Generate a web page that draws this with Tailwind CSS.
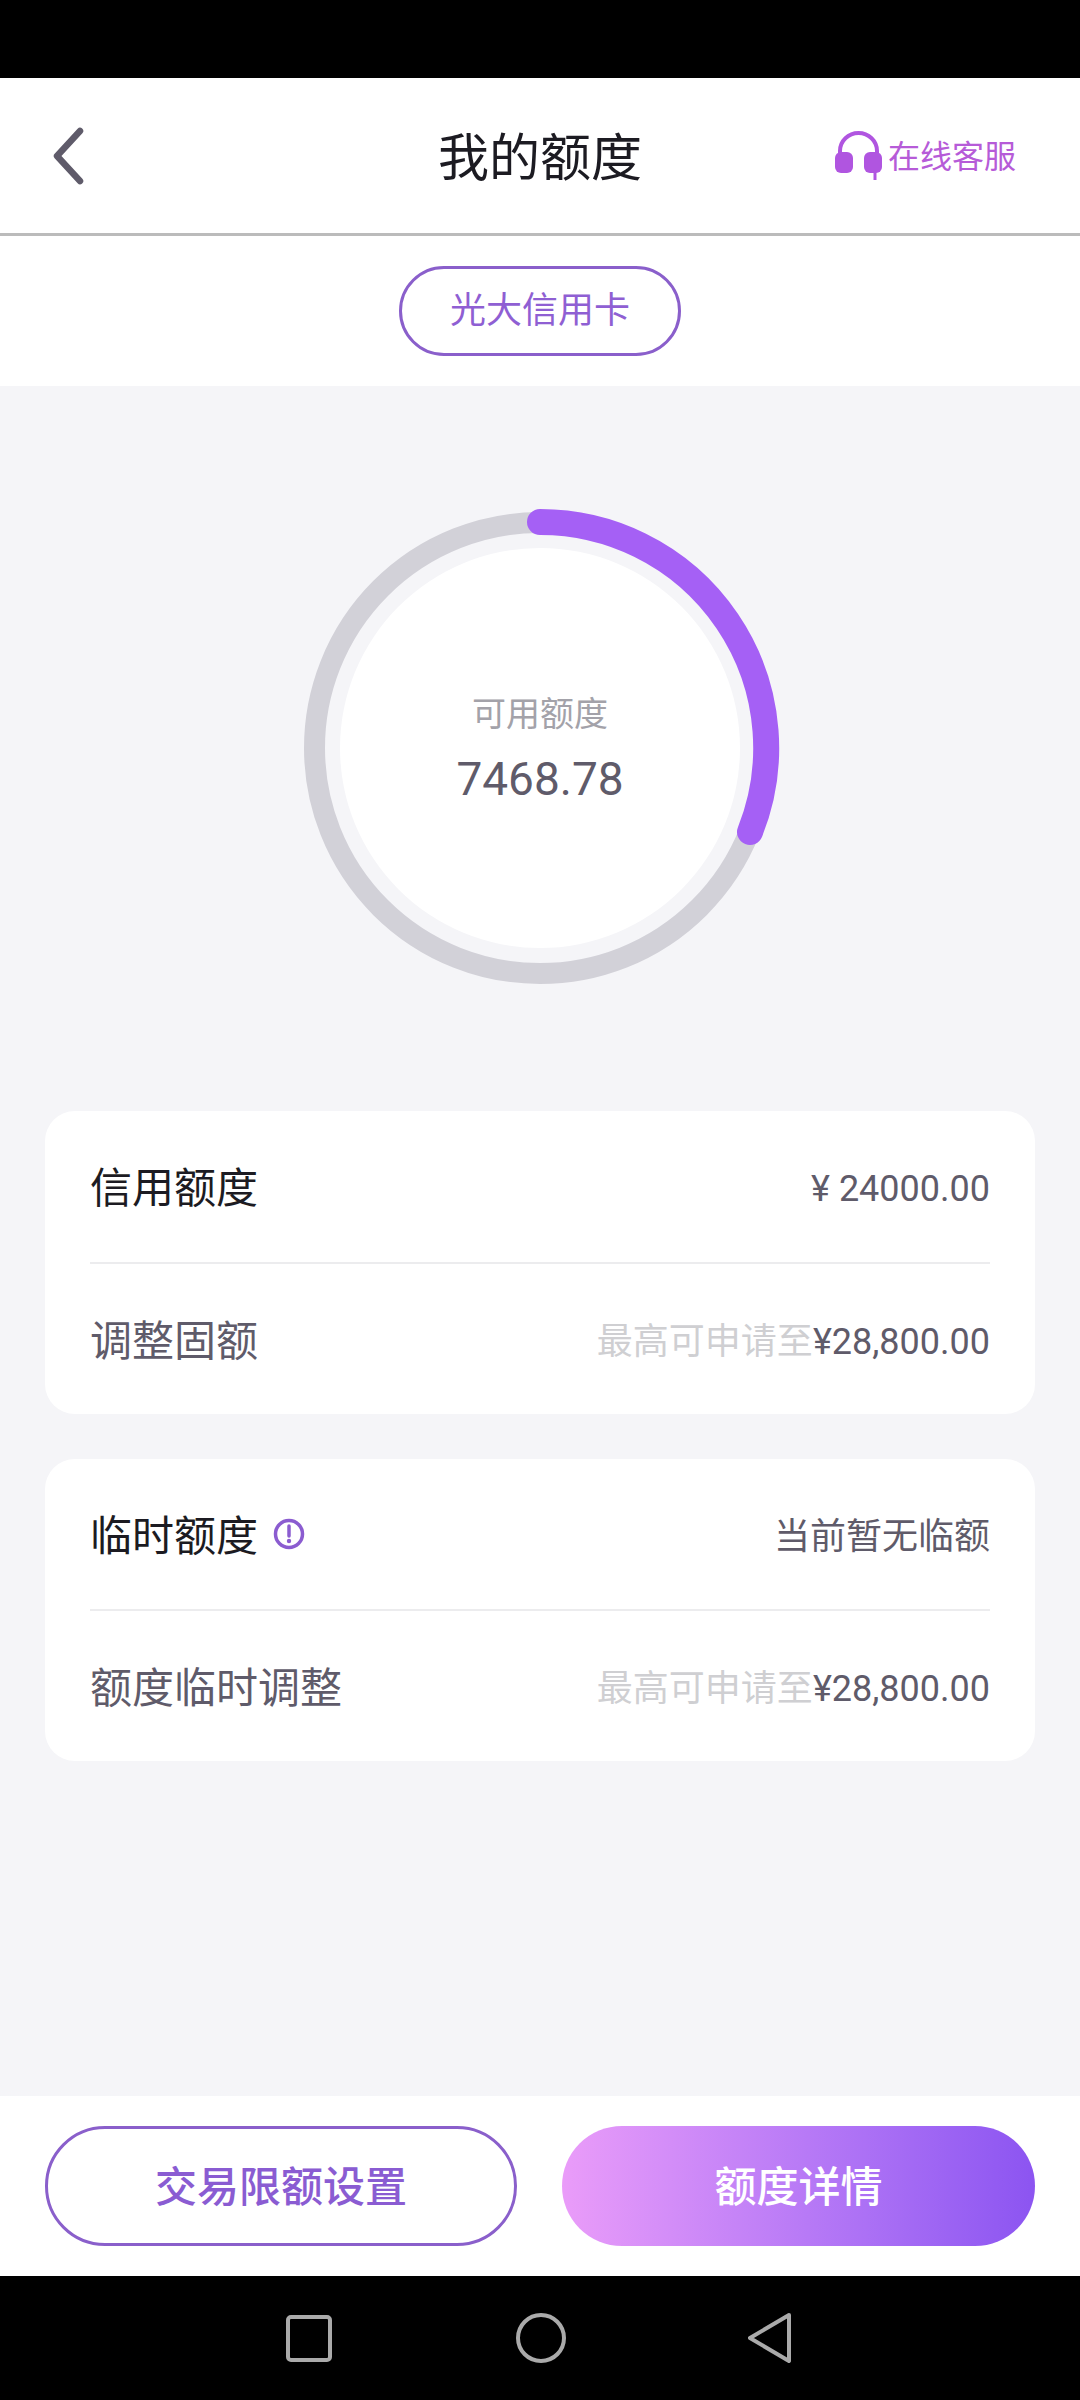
<!DOCTYPE html>
<html lang="zh-CN">
<head>
  <meta charset="UTF-8" />
  <meta name="viewport" content="width=device-width, initial-scale=1.0"/>
  <title>我的额度</title>
  <script src="https://cdn.jsdelivr.net/npm/@tailwindcss/browser@4"></script>
</head>
<body class="bg-black font-['Roboto','Noto_Sans_CJK_SC',sans-serif]">
  <div class="w-[1080px] h-[2400px] flex flex-col overflow-hidden">
    <!-- status bar -->
    <div class="h-[78px] bg-black shrink-0"></div>

    <!-- header -->
    <header class="h-[158px] shrink-0 bg-white border-b-[3px] border-[#bbbbbb] grid grid-cols-[1fr_auto_1fr] items-center">
      <svg class="w-[32px] h-[58px] ml-[52px]" viewBox="0 0 32 58" fill="none" stroke="#5f5b6a" stroke-width="6.5" stroke-linecap="round" stroke-linejoin="round">
        <path d="M28 4 5 29 28 54" />
      </svg>
      <h1 class="text-[51px] leading-none font-normal text-[#1c1b22] pt-[5px]">我的额度</h1>
      <div class="justify-self-end mr-[64px] flex items-center gap-[5px] text-[32px] leading-none text-[#b65bd8]">
        <svg class="w-[49px] h-[50px]" viewBox="0 0 49 50" fill="none">
          <path d="M6 24V20a18.500 18 0 0 1 37 0v4" stroke="#b055e0" stroke-width="4" />
          <rect x="1" y="21" width="18" height="21" rx="6" fill="#b055e0" />
          <rect x="30" y="21" width="18" height="21" rx="6" fill="#b055e0" />
          <path d="M41 40v9" stroke="#b055e0" stroke-width="3" />
        </svg>
        <span class="pt-[3px]">在线客服</span>
      </div>
    </header>

    <!-- card switcher -->
    <div class="h-[150px] shrink-0 bg-white flex justify-center pt-[30px]">
      <div class="w-[282px] h-[90px] rounded-full border-[3px] border-[#8a5fcb] flex items-center justify-center text-[36px] leading-none text-[#8f5fd3]">光大信用卡</div>
    </div>

    <main class="flex-1 bg-[#f5f5f8] flex flex-col items-center pt-[122px]">
      <!-- ring -->
      <div class="relative w-[480px] h-[480px] shrink-0">
        <svg class="w-full h-full" viewBox="0 0 480 480" fill="none">
          <circle cx="240" cy="240" r="225.5" stroke="#d2d1d8" stroke-width="21" />
          <circle cx="240" cy="240" r="200" fill="#ffffff" />
          <path d="M240 14A226 226 0 0 1 450 324" stroke="#a560f5" stroke-width="26" stroke-linecap="round" />
        </svg>
        <div class="absolute inset-0 flex flex-col items-center justify-center">
          <span class="text-[34px] leading-none text-[#a3a2a9] mt-[2px]">可用额度</span>
          <span class="text-[46px] leading-none text-[#5f5b6a] mt-[25px]">7468.78</span>
        </div>
      </div>

      <!-- limits -->
      <section class="w-[990px] mt-[123px] flex flex-col gap-[45px]">
        <div class="bg-white rounded-[30px] px-[45px]">
          <div class="h-[151px] flex items-center justify-between pt-[5px]">
            <span class="text-[42px] leading-none text-[#1c1b22]">信用额度</span>
            <span class="text-[36px] leading-none text-[#5f5b6a]">¥ 24000.00</span>
          </div>
          <div class="h-[2px] bg-[#ececee]"></div>
          <div class="h-[150px] flex items-center justify-between pt-[6px]">
            <span class="text-[42px] leading-none text-[#5f5b6a]">调整固额</span>
            <span class="text-[36px] leading-none text-[#5f5b6a]"><span class="text-[#cfcfd2]">最高可申请至</span>¥28,800.00</span>
          </div>
        </div>

        <div class="bg-white rounded-[30px] px-[45px]">
          <div class="h-[150px] flex items-center justify-between pt-[5px]">
            <span class="flex items-center gap-[15px] text-[42px] leading-none text-[#1c1b22]">
              临时额度
              <svg class="w-[32px] h-[32px] -mt-[5px]" viewBox="0 0 32 32" fill="none">
                <circle cx="16" cy="16" r="13.500" stroke="#8b5cd0" stroke-width="3.500" />
                <path d="M16 8v10" stroke="#8b5cd0" stroke-width="3.500" stroke-linecap="round" />
                <circle cx="16" cy="23" r="2.200" fill="#8b5cd0" />
              </svg>
            </span>
            <span class="text-[36px] leading-none text-[#5f5b6a]">当前暂无临额</span>
          </div>
          <div class="h-[2px] bg-[#ececee]"></div>
          <div class="h-[150px] flex items-center justify-between pt-[6px]">
            <span class="text-[42px] leading-none text-[#5f5b6a]">额度临时调整</span>
            <span class="text-[36px] leading-none text-[#5f5b6a]"><span class="text-[#cfcfd2]">最高可申请至</span>¥28,800.00</span>
          </div>
        </div>
      </section>
    </main>

    <!-- bottom actions -->
    <footer class="h-[180px] shrink-0 bg-white flex items-center justify-between px-[45px]">
      <button class="w-[472px] h-[120px] rounded-full border-[3px] border-[#8a5fcb] bg-white text-[42px] leading-none font-medium text-[#8a5cd2] pt-[4px]">交易限额设置</button>
      <button class="w-[473px] h-[120px] rounded-full bg-linear-to-r from-[#ea9cf9] to-[#8c54f1] text-[42px] leading-none font-medium text-white pt-[4px]">额度详情</button>
    </footer>

    <!-- system nav -->
    <nav class="h-[124px] shrink-0 bg-black flex items-center pl-[286px]">
      <svg class="w-[46px] h-[47px]" viewBox="0 0 46 47" fill="none" stroke="#aaaaaa" stroke-width="4">
        <rect x="2" y="2" width="42" height="43" rx="3" />
      </svg>
      <svg class="w-[50px] h-[50px] ml-[184px]" viewBox="0 0 50 50" fill="none" stroke="#aaaaaa" stroke-width="4">
        <circle cx="25" cy="25" r="23" />
      </svg>
      <svg class="w-[43px] h-[50px] ml-[182px]" viewBox="0 0 43 50" fill="none" stroke="#aaaaaa" stroke-width="4" stroke-linejoin="round">
        <path d="M41 2 2 25 41 48z" />
      </svg>
    </nav>
  </div>
</body>
</html>
